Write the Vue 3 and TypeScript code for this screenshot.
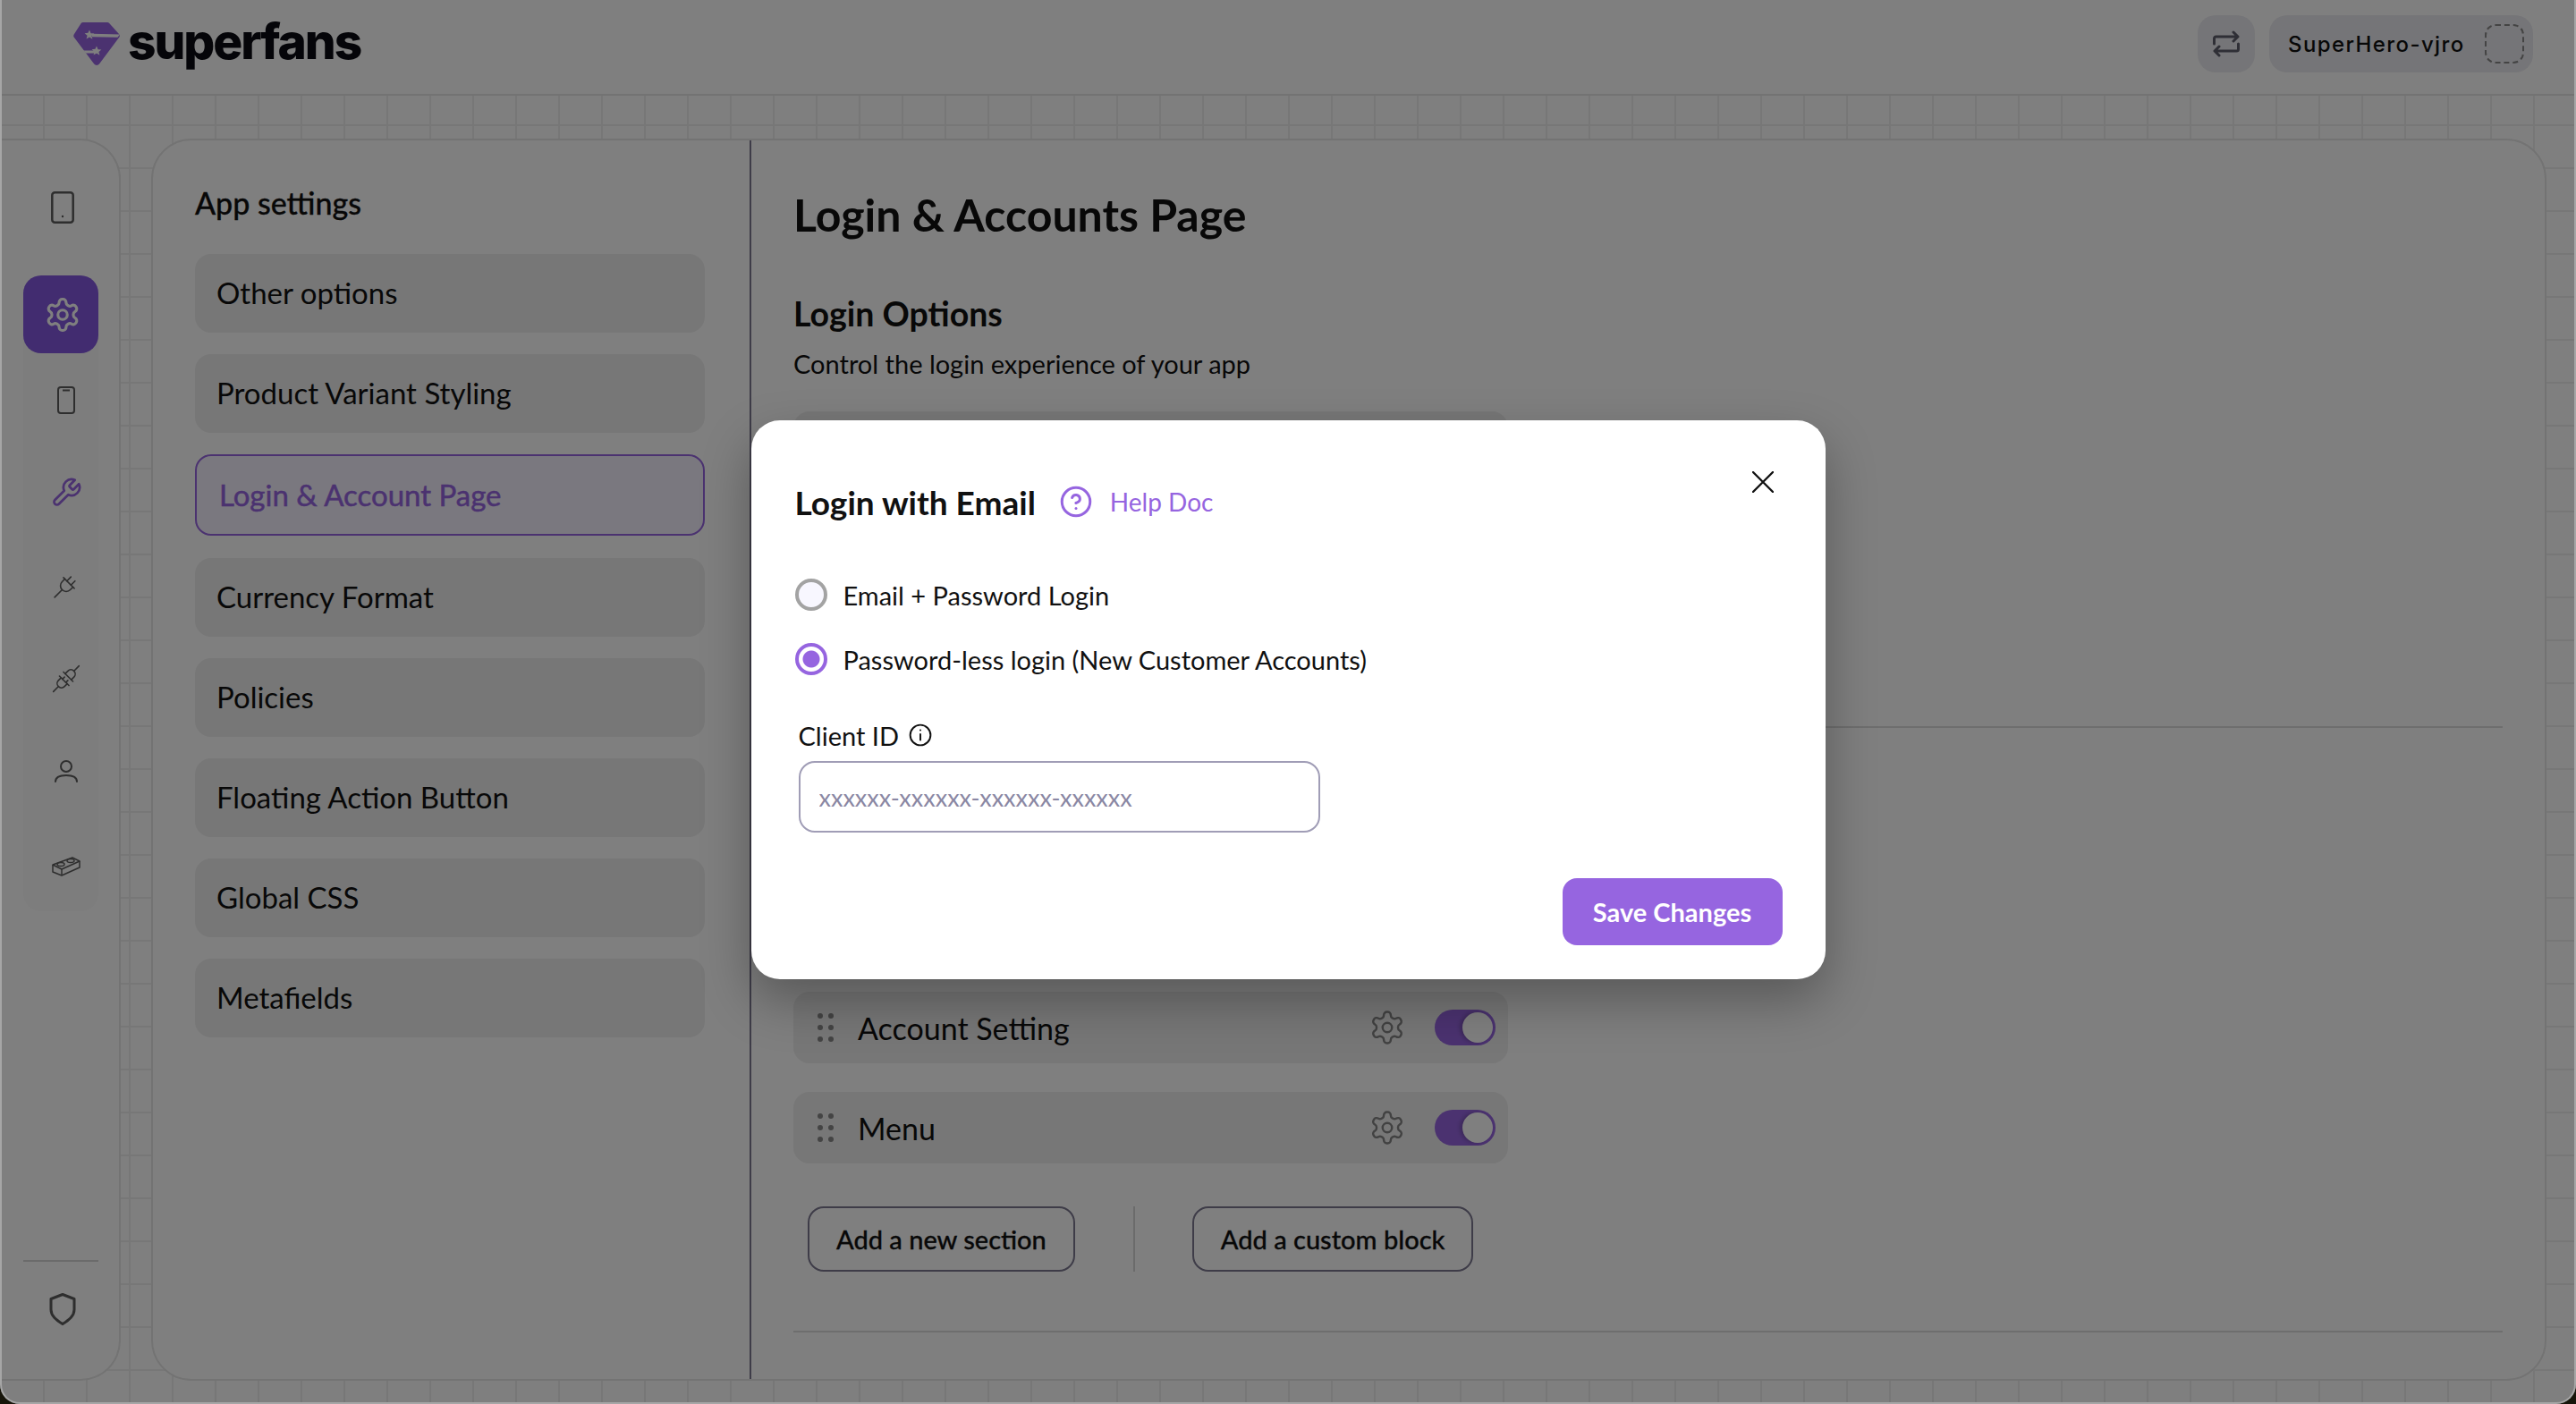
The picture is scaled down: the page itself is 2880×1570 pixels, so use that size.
<script setup lang="ts">
import { ref } from 'vue'

const settingsNav = [
  'Other options',
  'Product Variant Styling',
  'Login & Account Page',
  'Currency Format',
  'Policies',
  'Floating Action Button',
  'Global CSS',
  'Metafields',
]
const activeNav = 'Login & Account Page'
const sections = ['Account Setting', 'Menu']
const dragDots = [
  [3, 3], [15, 3],
  [3, 16], [15, 16],
  [3, 29], [15, 29],
]
const gearPath =
  'M12.22 2h-.44a2 2 0 0 0-2 2v.18a2 2 0 0 1-1 1.73l-.43.25a2 2 0 0 1-2 0l-.15-.08a2 2 0 0 0-2.73.73l-.22.38a2 2 0 0 0 .73 2.73l.15.1a2 2 0 0 1 1 1.72v.51a2 2 0 0 1-1 1.74l-.15.09a2 2 0 0 0-.73 2.73l.22.38a2 2 0 0 0 2.73.73l.15-.08a2 2 0 0 1 2 0l.43.25a2 2 0 0 1 1 1.73V20a2 2 0 0 0 2 2h.44a2 2 0 0 0 2-2v-.18a2 2 0 0 1 1-1.73l.43-.25a2 2 0 0 1 2 0l.15.08a2 2 0 0 0 2.73-.73l.22-.39a2 2 0 0 0-.73-2.73l-.15-.08a2 2 0 0 1-1-1.74v-.5a2 2 0 0 1 1-1.74l.15-.09a2 2 0 0 0 .73-2.73l-.22-.38a2 2 0 0 0-2.73-.73l-.15.08a2 2 0 0 1-2 0l-.43-.25a2 2 0 0 1-1-1.73V4a2 2 0 0 0-2-2z'
const starPath = 'M0-5l1.400 3.300 3.500.3-2.700 2.300.9 3.500L0 2.200-3.100 4.100l.9-3.500-2.700-2.300 3.500-.3z'

const loginMode = ref<'password' | 'passwordless'>('passwordless')
</script>

<template>
  <div class="window">
    <header class="topbar">
      <div class="brand">
        <svg class="brand-mark" viewBox="0 0 52 48">
          <path d="M11 0h27a3 3 0 0 1 2.200 1L51 13a3 3 0 0 1 .2 3.800L29 46.500a3.600 3.600 0 0 1-5.800 0L1 17a3 3 0 0 1-.3-3.400L8.500 1.300A3 3 0 0 1 11 0z" fill="#9665e0" />
          <path d="M21 12.800L52 13.500 49.500 16.800 21 16.200z" fill="#fff" />
          <path d="M11.500 31.500H26V34.500H13.800z" fill="#fff" />
          <path :d="starPath" transform="translate(18 14) scale(1.100)" fill="#fff" />
          <path :d="starPath" transform="translate(26 32) scale(1.100)" fill="#fff" />
        </svg>
        <span class="brand-name">superfans</span>
      </div>
      <div class="top-actions">
        <button class="swap-btn" type="button">
          <svg viewBox="0 0 30 30" width="30" height="30" fill="none" stroke="#5f5f6c" stroke-width="3" stroke-linecap="round" stroke-linejoin="round">
            <path d="M1.500 15V9a2 2 0 0 1 2-2h24M23 2l5 5-5 5" />
            <path d="M28.500 15v6a2 2 0 0 1-2 2h-24M7 28l-5-5 5-5" />
          </svg>
        </button>
        <div class="store-pill">
          <span>SuperHero-vjro</span>
          <i class="store-avatar"></i>
        </div>
      </div>
    </header>

    <div class="workspace">
      <aside class="sidebar">
        <svg class="side-phone" viewBox="0 0 26 36" width="26" height="36" fill="none" stroke="#5c5c5c" stroke-width="2.500">
          <rect x="1.300" y="1.300" width="23.400" height="33.400" rx="3" />
          <circle cx="13" cy="28" r="1.200" fill="#5c5c5c" stroke="none" />
        </svg>
        <nav class="rail">
          <a class="rail-item rail-active">
            <svg viewBox="0 0 24 24" width="42" height="42" fill="none" stroke="#fff" stroke-width="1.800" stroke-linejoin="round">
              <path :d="gearPath" />
              <circle cx="12" cy="12" r="3" />
            </svg>
          </a>
          <a class="rail-item">
            <svg viewBox="0 0 20 31" width="20" height="31" fill="none" stroke="#5c5c5c" stroke-width="2">
              <rect x="1" y="1" width="18" height="29" rx="3" />
              <path d="M6 4.500h8" />
            </svg>
          </a>
          <a class="rail-item">
            <svg viewBox="0 0 24 24" width="36" height="36" fill="none" stroke="#9665e0" stroke-width="1.800" stroke-linecap="round" stroke-linejoin="round">
              <path d="M14.700 6.300a1 1 0 0 0 0 1.400l1.600 1.600a1 1 0 0 0 1.400 0l3.770-3.770a6 6 0 0 1-7.940 7.940l-6.910 6.910a2.120 2.120 0 0 1-3-3l6.910-6.910a6 6 0 0 1 7.940-7.940l-3.760 3.760z" />
            </svg>
          </a>
          <a class="rail-item">
            <svg viewBox="0 0 28 28" width="30" height="30" fill="none" stroke="#5c5c5c" stroke-width="1.500" stroke-linecap="round" stroke-linejoin="round">
              <g transform="rotate(45 14 14)">
                <path d="M6 10h16" />
                <path d="M8 10v4a6 6 0 0 0 12 0v-4" />
                <path d="M11 10V4M17 10V4" />
                <path d="M14 20v11" />
              </g>
            </svg>
          </a>
          <a class="rail-item">
            <svg viewBox="0 0 30 30" width="32" height="32" fill="none" stroke="#5c5c5c" stroke-width="1.500" stroke-linecap="round" stroke-linejoin="round">
              <g transform="rotate(45 15 15)">
                <path d="M15 -4v7" />
                <path d="M10.500 12V8a4.500 4.500 0 0 1 9 0v4" />
                <path d="M8 12h14" />
                <path d="M8 18h14" />
                <path d="M10.500 18v4a4.500 4.500 0 0 0 9 0v-4" />
                <path d="M12.500 18v-3M17.500 18v-3" />
                <path d="M15 27v7" />
              </g>
            </svg>
          </a>
          <a class="rail-item">
            <svg viewBox="0 0 28 28" width="28" height="28" fill="none" stroke="#5c5c5c" stroke-width="2" stroke-linecap="round">
              <circle cx="14" cy="8" r="6" />
              <path d="M2 25c0-5 5-7 12-7 7 0 12 2 12 7" />
            </svg>
          </a>
          <a class="rail-item">
            <svg viewBox="0 0 32 26" width="32" height="26" fill="none" stroke="#5c5c5c" stroke-width="1.500" stroke-linejoin="round">
              <path d="M1 13l22-8 8 4-20 9z" />
              <path d="M1 13v8l10 4 20-9V9" />
              <path d="M11 18v7" />
              <ellipse cx="10" cy="12.500" rx="4" ry="2" />
              <ellipse cx="21" cy="8.500" rx="4" ry="2" />
            </svg>
          </a>
        </nav>
        <div class="side-footer">
          <svg viewBox="0 0 30 36" width="30" height="36" fill="none" stroke="#5c5c5c" stroke-width="3" stroke-linejoin="round">
            <path d="M15 1.500l13 5v12c0 7-6 11.500-13 16-7-4.500-13-9-13-16v-12z" />
          </svg>
        </div>
      </aside>

      <main class="panel">
        <section class="settings-col">
          <h2 class="settings-title">App settings</h2>
          <ul class="settings-nav">
            <li
              v-for="item in settingsNav"
              :key="item"
              class="settings-item"
              :class="{ 'is-active': item === activeNav }"
            >
              {{ item }}
            </li>
          </ul>
        </section>

        <section class="content">
          <h1 class="page-title">Login &amp; Accounts Page</h1>
          <h3 class="block-title">Login Options</h3>
          <p class="block-sub">Control the login experience of your app</p>
          <div class="login-card"></div>
          <hr class="rule rule-upper" />
          <div class="section-list">
            <div v-for="name in sections" :key="name" class="section-row">
              <svg class="drag" viewBox="0 0 18 32" width="18" height="32" fill="#888">
                <circle v-for="(d, i) in dragDots" :key="i" :cx="d[0]" :cy="d[1]" r="3" />
              </svg>
              <span class="section-name">{{ name }}</span>
              <svg viewBox="0 0 24 24" width="42" height="42" fill="none" stroke="#858585" stroke-width="1.400" stroke-linejoin="round">
                <path :d="gearPath" />
                <circle cx="12" cy="12" r="3" />
              </svg>
              <span class="toggle"><i></i></span>
            </div>
          </div>
          <div class="add-row">
            <button class="ghost-btn" type="button">Add a new section</button>
            <span class="add-sep"></span>
            <button class="ghost-btn" type="button">Add a custom block</button>
          </div>
          <hr class="rule rule-lower" />
        </section>
      </main>
    </div>

    <div class="overlay">
      <div class="modal">
        <button class="modal-close" type="button" aria-label="Close">
          <svg viewBox="0 0 24 24" width="24" height="24" fill="none" stroke="#111" stroke-width="2.400" stroke-linecap="round">
            <path d="M1 1l22 22M23 1L1 23" />
          </svg>
        </button>
        <div class="modal-head">
          <h2>Login with Email</h2>
          <svg viewBox="0 0 24 24" width="36" height="36" fill="none" stroke="#9665e0" stroke-width="2" stroke-linecap="round">
            <circle cx="12" cy="12" r="10.500" />
            <path d="M9.090 9a3 3 0 0 1 5.830 1c0 2-3 3-3 3" />
            <path d="M12 17h.01" />
          </svg>
          <a class="help-link">Help Doc</a>
        </div>

        <label class="radio-row" @click="loginMode = 'password'">
          <span class="radio" :class="{ checked: loginMode === 'password' }"></span>
          Email + Password Login
        </label>
        <label class="radio-row" @click="loginMode = 'passwordless'">
          <span class="radio" :class="{ checked: loginMode === 'passwordless' }"></span>
          Password-less login (New Customer Accounts)
        </label>

        <div class="field">
          <div class="field-label">
            Client ID
            <svg viewBox="0 0 24 24" width="26" height="26" fill="none" stroke="#111" stroke-width="1.800" stroke-linecap="round">
              <circle cx="12" cy="12" r="10.500" />
              <path d="M12 17v-6" />
              <path d="M12 7h.01" />
            </svg>
          </div>
          <input class="field-input" type="text" placeholder="xxxxxx-xxxxxx-xxxxxx-xxxxxx" />
        </div>

        <div class="modal-actions">
          <button class="save-btn" type="button">Save Changes</button>
        </div>
      </div>
    </div>

    <div class="window-edge"></div>
  </div>
</template>

<style>
html,
body {
  margin: 0;
  background: #17150a;
}
</style>

<style scoped>
* {
  box-sizing: border-box;
}

.window {
  position: relative;
  width: 2880px;
  height: 1570px;
  overflow: hidden;
  border-radius: 0 0 22px 22px;
  font-family: Lato, "Open Sans", sans-serif;
  color: #111;
  background-color: #fff;
  background-image:
    linear-gradient(#efefef 2px, transparent 2px),
    linear-gradient(90deg, #efefef 2px, transparent 2px);
  background-size: 48px 48px;
  background-position: 0 43px, 0 0;
}

.topbar {
  height: 107px;
  display: flex;
  justify-content: space-between;
  padding: 17px 48px 0 82px;
  background: #fff;
  border-bottom: 2px solid #e6e6e6;
}

.brand {
  display: flex;
  align-items: flex-start;
  gap: 9px;
  margin-top: 8px;
}

.brand-mark {
  width: 52px;
  height: 48px;
}

.brand-name {
  margin-top: -3px;
  font-family: Inter, sans-serif;
  font-size: 55px;
  font-weight: 800;
  line-height: 48px;
  letter-spacing: -2.100px;
  color: #0b0b12;
}

.top-actions {
  display: flex;
  gap: 16px;
}

.swap-btn {
  width: 64px;
  height: 64px;
  display: flex;
  align-items: center;
  justify-content: center;
  border: 0;
  border-radius: 20px;
  background: #ebebf0;
}

.store-pill {
  width: 295px;
  height: 64px;
  display: flex;
  align-items: center;
  justify-content: space-between;
  padding: 0 10px 0 21px;
  border-radius: 20px;
  background: #ebebf0;
  font-family: Inter, sans-serif;
  font-size: 24px;
  font-weight: 500;
  letter-spacing: 1.400px;
}

.store-avatar {
  width: 44px;
  height: 44px;
  border: 2px dashed #888;
  border-radius: 12px;
}

.workspace {
  height: 1463px;
  display: flex;
  gap: 34px;
  padding: 48px 33px 26px 2px;
}

.sidebar {
  width: 133px;
  display: flex;
  flex-direction: column;
  background: #fff;
  border: 2px solid #e6e6e6;
  border-left: 0;
  border-radius: 0 45px 45px 0;
}

.side-phone {
  margin: 57px 0 0 55px;
}

.rail {
  width: 84px;
  margin: 58px 0 0 24px;
  background: #fafafa;
  border-radius: 20px;
  display: flex;
  flex-direction: column;
}

.rail-item {
  height: 104px;
  display: flex;
  align-items: center;
  justify-content: center;
  padding-left: 11px;
}

.rail-active {
  height: 87px;
  padding-left: 3px;
  background: #8458e0;
  border-radius: 20px;
}

.side-footer {
  margin: auto 23px 0 24px;
  height: 133px;
  padding: 35px 0 0 4px;
  display: flex;
  justify-content: center;
  align-items: flex-start;
  border-top: 2px solid #d6d6d6;
}

.panel {
  flex: 1;
  display: flex;
  background: #fff;
  border: 2px solid #e6e6e6;
  border-radius: 45px;
  overflow: hidden;
}

.settings-col {
  width: 669px;
  flex: none;
  padding: 0 50px 0 47px;
  border-right: 2px solid #7c7890;
}

.settings-title {
  margin: 0;
  padding-top: 50px;
  height: 127px;
  font-size: 34px;
  line-height: 40px;
  font-weight: 500;
  color: #111;
  -webkit-text-stroke: 0.3px #111;
}

.settings-nav {
  list-style: none;
  margin: 0;
  padding: 0;
  display: flex;
  flex-direction: column;
  gap: 24px;
}

.settings-item {
  height: 88px;
  display: flex;
  align-items: center;
  padding: 0 0 2px 24px;
  background: #eeeeee;
  border-radius: 18px;
  font-size: 33px;
}

.settings-item.is-active {
  height: 91px;
  margin-bottom: 1px;
  padding-left: 25px;
  background: #f5f0ff;
  border: 2px solid #9665e0;
  color: #9665e0;
  -webkit-text-stroke: 0.5px #9665e0;
}

.content {
  flex: 1;
  padding: 0 47px;
}

.page-title {
  margin: 0;
  padding-top: 54px;
  font-size: 50px;
  line-height: 58px;
  font-weight: 700;
}

.block-title {
  margin: 60px 0 0;
  font-size: 37.500px;
  line-height: 44px;
  font-weight: 700;
}

.block-sub {
  margin: 16px 0 0;
  font-size: 29px;
  line-height: 36px;
}

.login-card {
  width: 799px;
  height: 100px;
  margin-top: 35px;
  background: #eeeeee;
  border-radius: 18px;
}

.rule {
  margin: 0;
  border: 0;
  height: 2px;
  background: #dcdcdc;
}

.rule-upper {
  margin-top: 252px;
}

.section-list {
  margin-top: 295px;
  display: flex;
  flex-direction: column;
  gap: 32px;
}

.section-row {
  width: 799px;
  height: 80px;
  display: flex;
  align-items: center;
  gap: 10px;
  padding: 0 14px 0 27px;
  background: #eeeeee;
  border-radius: 18px;
}

.section-name {
  flex: 1;
  margin-left: 17px;
  font-size: 34px;
}

.toggle {
  width: 68px;
  height: 40px;
  margin-left: 22px;
  padding: 3px;
  display: flex;
  justify-content: flex-end;
  background: #9665e0;
  border-radius: 20px;
}

.toggle i {
  width: 34px;
  height: 34px;
  border-radius: 50%;
  background: #fff;
  box-shadow: -3px 0 4px rgba(0, 0, 0, 0.2);
}

.add-row {
  display: flex;
  align-items: stretch;
  margin: 48px 0 0 16px;
}

.ghost-btn {
  height: 73px;
  padding: 0 30px;
  background: #fff;
  border: 2px solid #7c7890;
  border-radius: 18px;
  font-family: inherit;
  font-size: 29px;
  font-weight: 500;
  color: #111;
  -webkit-text-stroke: 0.3px #111;
}

.add-sep {
  width: 2px;
  margin: 0 64px 0 65px;
  background: #d6d6d6;
}

.rule-lower {
  margin-top: 66px;
}

.overlay {
  position: absolute;
  inset: 0;
  display: flex;
  align-items: center;
  justify-content: center;
  padding-bottom: 5px;
  background: rgba(0, 0, 0, 0.5);
}

.modal {
  position: relative;
  width: 1201px;
  height: 625px;
  padding: 0 48px 0 49px;
  background: #fff;
  border-radius: 32px;
  box-shadow: 0 24px 56px rgba(0, 0, 0, 0.3);
}

.modal-close {
  position: absolute;
  top: 57px;
  right: 58px;
  padding: 0;
  display: flex;
  border: 0;
  background: none;
}

.modal-head {
  display: flex;
  align-items: center;
  height: 70px;
  padding-top: 56px;
  box-sizing: content-box;
}

.modal-head h2 {
  margin: 0 27px 0 0;
  font-size: 37px;
  font-weight: 700;
  color: #111;
}

.help-link {
  margin-left: 20px;
  font-size: 28px;
  color: #9665e0;
}

.radio-row {
  display: flex;
  align-items: center;
  gap: 18px;
  height: 36px;
  margin-top: 36px;
  font-size: 29px;
}

.modal-head + .radio-row {
  margin-top: 51px;
}

.radio {
  width: 36px;
  height: 36px;
  flex: none;
  border: 4px solid #a3a3a3;
  border-radius: 50%;
  background: #f8f7ff;
}

.radio.checked {
  border-color: #9665e0;
  background: #fff radial-gradient(circle, #9665e0 0 9px, #fff 10px);
}

.field {
  margin: 50px 0 0 4px;
}

.field-label {
  display: flex;
  align-items: center;
  gap: 11px;
  height: 34px;
  font-size: 29px;
}

.field-input {
  display: block;
  width: 583px;
  height: 80px;
  margin-top: 12px;
  padding: 0 21px;
  border: 2px solid #a09db6;
  border-radius: 18px;
  outline: 0;
  font-family: inherit;
  font-size: 27px;
}

.field-input::placeholder {
  color: #8a87a3;
  opacity: 1;
}

.modal-actions {
  display: flex;
  justify-content: flex-end;
  margin-top: 51px;
}

.save-btn {
  width: 246px;
  height: 75px;
  border: 0;
  border-radius: 16px;
  background: #9665e0;
  color: #fff;
  font-family: inherit;
  font-size: 29px;
  font-weight: 700;
}

.window-edge {
  position: absolute;
  inset: 0;
  border: 2px solid #a6a6a6;
  border-top: 0;
  border-radius: 0 0 22px 22px;
  pointer-events: none;
}
</style>
